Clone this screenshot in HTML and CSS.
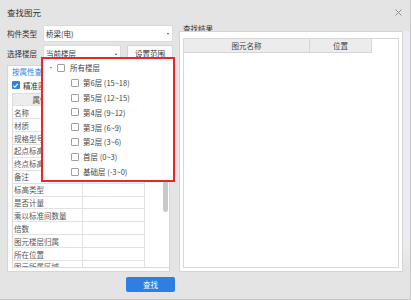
FILE: index.html
```html
<!DOCTYPE html>
<html lang="zh-CN">
<head>
  <meta charset="UTF-8" />
  <meta name="viewport" content="width=device-width, initial-scale=1.0"/>
  <title>查找图元</title>
  <link rel="stylesheet" href="styles.css">
</head>
<body>
  <div class="dialog">
    <div class="titlebar">
      <span class="title">查找图元</span>
      <svg class="close" width="7" height="7" viewBox="0 0 7 7"><path d="M0.5 0.5L6.5 6.5M6.5 0.5L0.5 6.5" stroke="#8e8e8e" stroke-width="1"/></svg>
    </div>

    <div class="main">
      <div class="left">
        <div class="field">
          <span class="label">构件类型</span>
          <div class="select wide">桥梁(电)<i class="caret"></i></div>
        </div>
        <div class="field">
          <span class="label">选择楼层</span>
          <div class="select narrow">当前楼层<i class="caret up"></i></div>
          <button class="btn">设置范围</button>
        </div>

        <div class="group">
          <div class="tab">按属性查找</div>
          <div class="check-row">
            <span class="checkbox checked"><svg width="7" height="7" viewBox="0 0 7 7"><path d="M1.3 3.6L2.9 5.1L5.8 1.9" fill="none" stroke="#fff" stroke-width="1.1"/></svg></span>
            精准匹配
          </div>
          <div class="prop-table">
            <div class="prop-cols">
              <div class="prop-row head"><span>属性名称</span><span>属性值</span></div>
              <div class="prop-row"><span>名称</span><span></span></div>
              <div class="prop-row"><span>材质</span><span></span></div>
              <div class="prop-row"><span>规格型号</span><span></span></div>
              <div class="prop-row"><span>起点标高</span><span></span></div>
              <div class="prop-row"><span>终点标高</span><span></span></div>
              <div class="prop-row"><span>备注</span><span></span></div>
              <div class="prop-row"><span>标高类型</span><span></span></div>
              <div class="prop-row"><span>是否计量</span><span></span></div>
              <div class="prop-row"><span>乘以标准间数量</span><span></span></div>
              <div class="prop-row"><span>倍数</span><span></span></div>
              <div class="prop-row"><span>图元楼层归属</span><span></span></div>
              <div class="prop-row"><span>所在位置</span><span></span></div>
              <div class="prop-row"><span>图元所属区域</span><span></span></div>
            </div>
            <div class="filler"></div>
            <div class="scrollbar"><div class="thumb"></div></div>
          </div>
        </div>

        <!-- 楼层下拉，展开状态 -->
        <div class="dropdown">
          <div class="tree-row root"><i class="toggle"></i><span class="box"></span>所有楼层</div>
          <div class="tree-row child"><span class="box"></span>第6层 (15~18)</div>
          <div class="tree-row child"><span class="box"></span>第5层 (12~15)</div>
          <div class="tree-row child"><span class="box"></span>第4层 (9~12)</div>
          <div class="tree-row child"><span class="box"></span>第3层 (6~9)</div>
          <div class="tree-row child"><span class="box"></span>第2层 (3~6)</div>
          <div class="tree-row child"><span class="box"></span>首层 (0~3)</div>
          <div class="tree-row child"><span class="box"></span>基础层 (-3~0)</div>
        </div>
      </div>

      <div class="right">
        <div class="legend">查找结果</div>
        <div class="result-box">
          <div class="result-grid">
            <div class="result-head">
              <span class="col-name">图元名称</span>
              <span class="col-pos">位置</span>
            </div>
          </div>
        </div>
      </div>
      <div class="strip"></div>
    </div>

    <div class="footer"><button class="find">查找</button></div>
  </div>
</body>
</html>
```

FILE: styles.css
```css
* { box-sizing: border-box; }
body { margin: 0; font-family: "Noto Sans CJK SC", "Noto Sans", sans-serif; font-size: 7.5px; color: #3a3a3a; background: #e4e4e4;}
.dialog { width: 411px; height: 300px; background: #e4e4e4; border-right: 1px solid #c6c6c6; border-bottom: 1px solid #c6c6c6; display: flex; flex-direction: column;}

.titlebar { height: 22px; padding: 2px 0 0 7px; display: flex; align-items: center;}
.title { font-size: 8.5px; color: #333;}
.close { margin-left: auto; margin-right: 8px;}

.main { height: 250px; padding-left: 7px; display: flex;}
.left { width: 166px; position: relative; display: flex; flex-direction: column;}
.field { height: 17px; margin-top: 3px; display: flex; align-items: center;}
.label { width: 36px; color: #333;}
.select { height: 17px; background: #fff; border: 1px solid #dadada; border-radius: 2px; padding-left: 2px; display: flex; align-items: center; color: #333;}
.select.wide { width: 130px;}
.select.narrow { width: 78px;}
.caret { margin-left: auto; margin-right: 3px; width: 0; height: 0; border-left: 1.5px solid transparent; border-right: 1.5px solid transparent; border-top: 2px solid #555;}
.caret.up { border-top: none; border-bottom: 2px solid #555;}
.btn { width: 46px; height: 17px; margin-left: 6px; padding: 0; background: #fbfbfb; border: 1px solid #d3d3d3; border-radius: 2px; font: inherit; color: #333;}

.group { width: 163px; height: 207px; margin-top: 3px; background: #fff; border: 1px solid #d6d6d6; padding-left: 4px; display: flex; flex-direction: column;}
.tab { height: 11px; line-height: 11px; color: #2f7ddb;}
.check-row { height: 16px; display: flex; align-items: center; color: #333;}
.checkbox { width: 7.5px; height: 7.5px; margin-right: 3.5px; border-radius: 1px; display: flex; align-items: center; justify-content: center;}
.checkbox.checked { background: #2f80e2;}

.prop-table { height: 175px; margin-bottom: 3px; border: 1px solid #dcdcdc; border-right: none; display: flex; overflow: hidden;}
.prop-row { display: flex; height: 12.9px; border-bottom: 1px solid #e2e2e2;}
.prop-row span { height: 100%; padding-left: 1px; display: flex; align-items: center; border-right: 1px solid #e2e2e2; white-space: nowrap; overflow: hidden; color: #555;}
.prop-row span:first-child { width: 70px;}
.prop-row span:last-child { width: 62px;}
.prop-row.head { height: 12.3px; background: #ededed;}
.prop-row.head span { justify-content: center; padding-left: 0; color: #444;}
.filler { flex: 1;}
.scrollbar { width: 8px; padding: 2px 1px 0 2px;}
.thumb { width: 5px; height: 116px; background: #c9c9c9; border-radius: 3px;}

.dropdown { position: absolute; left: 34px; top: 35px; width: 134px; height: 125px; background: #fff; border: 2px solid #e8262b; padding-top: 1.6px;}
.tree-row { height: 14.8px; display: flex; align-items: center; color: #444; white-space: nowrap;}
.tree-row.root { padding-left: 5.5px;}
.tree-row.child { padding-left: 28px;}
.toggle { width: 0; height: 0; margin: 0 5px 0 1.5px; border-left: 1.8px solid transparent; border-right: 1.8px solid transparent; border-top: 2.4px solid #777;}
.box { width: 8px; height: 8px; border: 1px solid #a0a0a0; border-radius: 1px; background: #fff; margin-right: 5px;}
.tree-row.child .box { margin-right: 4px;}

.right { width: 224px; margin-left: 6px; display: flex; flex-direction: column;}
.legend { height: 6px; margin-top: 3px; padding-left: 4px; line-height: 8px; color: #333;}
.result-box { flex: 1; background: #fff; border: 1px solid #d4d4d4; padding: 6px 3px 3px 3px; display: flex;}
.result-grid { flex: 1; border: 1px solid #d8d8d8;}
.result-head { display: flex; height: 14px;}
.result-head span { height: 100%; background: #ececec; border-right: 1px solid #d6d6d6; border-bottom: 1px solid #d6d6d6; display: flex; align-items: center; justify-content: center; color: #444;}
.col-name { width: 126px;}
.col-pos { width: 62px;}

.strip { width: 7px; margin-top: 9px; background: linear-gradient(#ececf0 88%, #e4e4e4);}

.footer { height: 27px; padding-left: 126px;}
.find { width: 49px; height: 15px; margin-top: 5px; padding: 0; border: none; border-radius: 2px; background: #2d7fe2; color: #fff; font: inherit;}
```
